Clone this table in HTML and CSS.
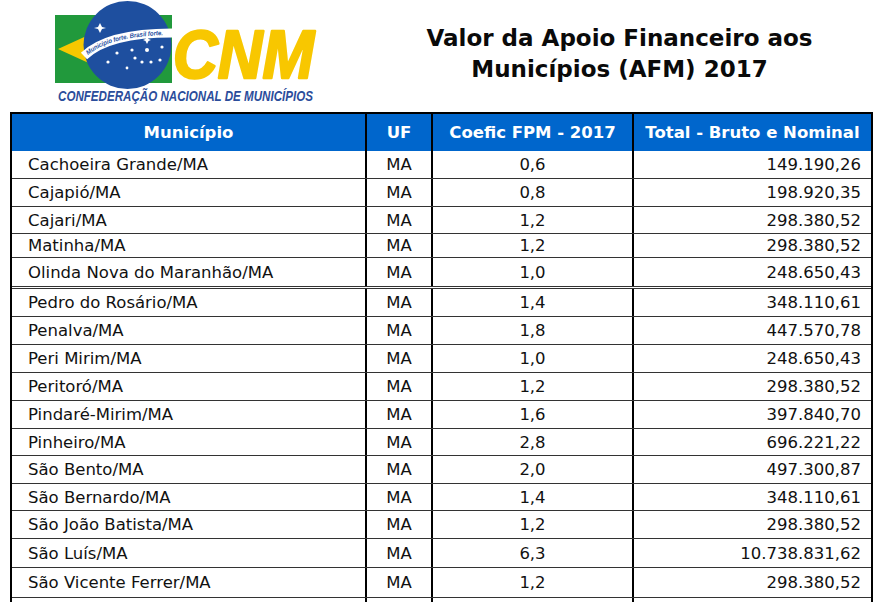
FILE: index.html
```html
<!DOCTYPE html>
<html lang="pt-BR">
<head>
<meta charset="utf-8">
<title>Valor da Apoio Financeiro aos Municípios (AFM) 2017</title>
<link rel="stylesheet" href="styles.css">
</head>
<body>
<div class="page">
  <header class="top">
    <div class="logo-box">
      <svg class="logo" viewBox="0 0 366 112" width="366" height="112" xmlns="http://www.w3.org/2000/svg">
        <defs>
          <path id="bandpath" d="M84 56 Q108 33 172 33"/>
        </defs>
        <rect x="55" y="15" width="117" height="68" fill="#21993c"/>
        <polygon points="58,49 128,17 168,49 128,81" fill="#f7c800"/>
        <circle cx="127.5" cy="45" r="44" fill="#1e4f9f"/>
        <path d="M84 56 Q108 33 172 33" stroke="#ffffff" stroke-width="9" fill="none"/>
        <text class="band-text" dy="2"><textPath href="#bandpath" startOffset="4" textLength="80" lengthAdjust="spacingAndGlyphs">Município forte. Brasil forte.</textPath></text>
        <g fill="#ffffff">
          <polygon points="100,23 102,27 106,28 102,29 100,33 98,29 94,28 98,27"/>
          <polygon points="147,36 148.5,39 151,40 148.5,41 147,44 145.5,41 143,40 145.5,39"/>
          <circle cx="117" cy="53" r="1.6"/>
          <circle cx="132" cy="50" r="1.6"/>
          <circle cx="147" cy="50" r="2"/>
          <circle cx="162" cy="47" r="1.6"/>
          <circle cx="108" cy="62" r="1.6"/>
          <circle cx="135" cy="58" r="1.6"/>
          <circle cx="142" cy="62" r="1.6"/>
          <circle cx="151" cy="62" r="1.6"/>
          <circle cx="160" cy="60" r="1.6"/>
          <circle cx="127" cy="68" r="1.4"/>
        </g>
        <text class="cnm" x="173" y="78" textLength="141" lengthAdjust="spacingAndGlyphs">CNM</text>
        <text class="conf" x="58" y="101" textLength="255" lengthAdjust="spacingAndGlyphs">CONFEDERAÇÃO NACIONAL DE MUNICÍPIOS</text>
      </svg>
    </div>
    <h1 class="title">Valor da Apoio Financeiro aos<br>Municípios (AFM) 2017</h1>
  </header>

  <div class="table">
    <div class="row head">
      <div class="cell c1">Município</div>
      <div class="cell c2">UF</div>
      <div class="cell c3">Coefic FPM - 2017</div>
      <div class="cell c4">Total - Bruto e Nominal</div>
    </div>
    <div class="body">
      <div class="row"><div class="cell c1">Cachoeira Grande/MA</div><div class="cell c2">MA</div><div class="cell c3">0,6</div><div class="cell c4">149.190,26</div></div>
      <div class="row"><div class="cell c1">Cajapió/MA</div><div class="cell c2">MA</div><div class="cell c3">0,8</div><div class="cell c4">198.920,35</div></div>
      <div class="row"><div class="cell c1">Cajari/MA</div><div class="cell c2">MA</div><div class="cell c3">1,2</div><div class="cell c4">298.380,52</div></div>
      <div class="row"><div class="cell c1">Matinha/MA</div><div class="cell c2">MA</div><div class="cell c3">1,2</div><div class="cell c4">298.380,52</div></div>
      <div class="row"><div class="cell c1">Olinda Nova do Maranhão/MA</div><div class="cell c2">MA</div><div class="cell c3">1,0</div><div class="cell c4">248.650,43</div></div>
      <div class="row"><div class="cell c1">Pedro do Rosário/MA</div><div class="cell c2">MA</div><div class="cell c3">1,4</div><div class="cell c4">348.110,61</div></div>
      <div class="row"><div class="cell c1">Penalva/MA</div><div class="cell c2">MA</div><div class="cell c3">1,8</div><div class="cell c4">447.570,78</div></div>
      <div class="row"><div class="cell c1">Peri Mirim/MA</div><div class="cell c2">MA</div><div class="cell c3">1,0</div><div class="cell c4">248.650,43</div></div>
      <div class="row"><div class="cell c1">Peritoró/MA</div><div class="cell c2">MA</div><div class="cell c3">1,2</div><div class="cell c4">298.380,52</div></div>
      <div class="row"><div class="cell c1">Pindaré-Mirim/MA</div><div class="cell c2">MA</div><div class="cell c3">1,6</div><div class="cell c4">397.840,70</div></div>
      <div class="row"><div class="cell c1">Pinheiro/MA</div><div class="cell c2">MA</div><div class="cell c3">2,8</div><div class="cell c4">696.221,22</div></div>
      <div class="row"><div class="cell c1">São Bento/MA</div><div class="cell c2">MA</div><div class="cell c3">2,0</div><div class="cell c4">497.300,87</div></div>
      <div class="row"><div class="cell c1">São Bernardo/MA</div><div class="cell c2">MA</div><div class="cell c3">1,4</div><div class="cell c4">348.110,61</div></div>
      <div class="row"><div class="cell c1">São João Batista/MA</div><div class="cell c2">MA</div><div class="cell c3">1,2</div><div class="cell c4">298.380,52</div></div>
      <div class="row"><div class="cell c1">São Luís/MA</div><div class="cell c2">MA</div><div class="cell c3">6,3</div><div class="cell c4">10.738.831,62</div></div>
      <div class="row"><div class="cell c1">São Vicente Ferrer/MA</div><div class="cell c2">MA</div><div class="cell c3">1,2</div><div class="cell c4">298.380,52</div></div>
      <div class="row"><div class="cell c1">Presidente Médici/MA</div><div class="cell c2">MA</div><div class="cell c3">1,2</div><div class="cell c4">298.380,52</div></div>
    </div>
  </div>
</div>
</body>
</html>
```

FILE: styles.css
```css
* {
  box-sizing: border-box;
}

html, body {
  margin: 0;
  padding: 0;
  background: #ffffff;
}

body {
  font-family: "DejaVu Sans", Verdana, sans-serif;
  color: #111111;
}

.page {
  width: 891px;
  height: 602px;
  overflow: hidden;
}

/* ---------- header ---------- */
.top {
  display: flex;
  height: 112px;
  width: 873px;
}

.logo-box {
  width: 366px;
  flex: none;
}

.logo {
  display: block;
}

.band-text {
  font-family: "Liberation Sans", Arial, sans-serif;
  font-size: 6.5px;
  font-style: italic;
  font-weight: bold;
  fill: #1e4f9f;
}

.cnm {
  font-family: "Liberation Sans", Arial, sans-serif;
  font-weight: bold;
  font-style: italic;
  font-size: 68px;
  fill: #f8c700;
  stroke: #f8c700;
  stroke-width: 2.5px;
  stroke-linejoin: round;
}

.conf {
  font-family: "Liberation Sans", Arial, sans-serif;
  font-weight: bold;
  font-style: italic;
  font-size: 15.5px;
  fill: #2b4d9b;
}

.title {
  flex: 1;
  margin: 0;
  padding-top: 23px;
  text-align: center;
  font-family: "DejaVu Sans", Verdana, sans-serif;
  font-weight: bold;
  font-size: 23px;
  line-height: 31px;
  color: #0a0a0a;
}

/* ---------- table ---------- */
.table {
  margin-left: 10px;
  width: 863px;
  border: 2px solid #000000;
  border-bottom: none;
}

.row {
  display: grid;
  grid-template-columns: 353px 66px 201px 239px;
  height: 28px;
  font-size: 16.5px;
}

.cell {
  display: flex;
  align-items: center;
  white-space: nowrap;
}

.c2, .c3, .c4 {
  border-left: 2px solid #000000;
}

.c1 {
  padding-left: 16px;
}

.c2, .c3 {
  justify-content: center;
}

.c4 {
  justify-content: flex-end;
  padding-right: 10px;
}

.head {
  height: 37px;
  background: #0066cc;
  color: #ffffff;
  font-weight: bold;
}

.head .c1 {
  justify-content: center;
  padding-left: 0;
}

.head .c4 {
  justify-content: center;
  padding-right: 0;
}

.body .row + .row {
  border-top: 1px solid #333333;
}

.body .row:nth-child(1) { height: 27px; }
.body .row:nth-child(3) { height: 27px; }
.body .row:nth-child(4) { height: 24px; }
.body .row:nth-child(5) { height: 29px; }
.body .row:nth-child(6) { height: 30px; border-top: 3px double #333333; }
.body .row:nth-child(11) { height: 27px; }
.body .row:nth-child(13) { height: 27px; }
.body .row:nth-child(15) { height: 29px; }
.body .row:nth-child(16) { height: 30px; }
.body .row:nth-child(17) { height: 30px; }
```
